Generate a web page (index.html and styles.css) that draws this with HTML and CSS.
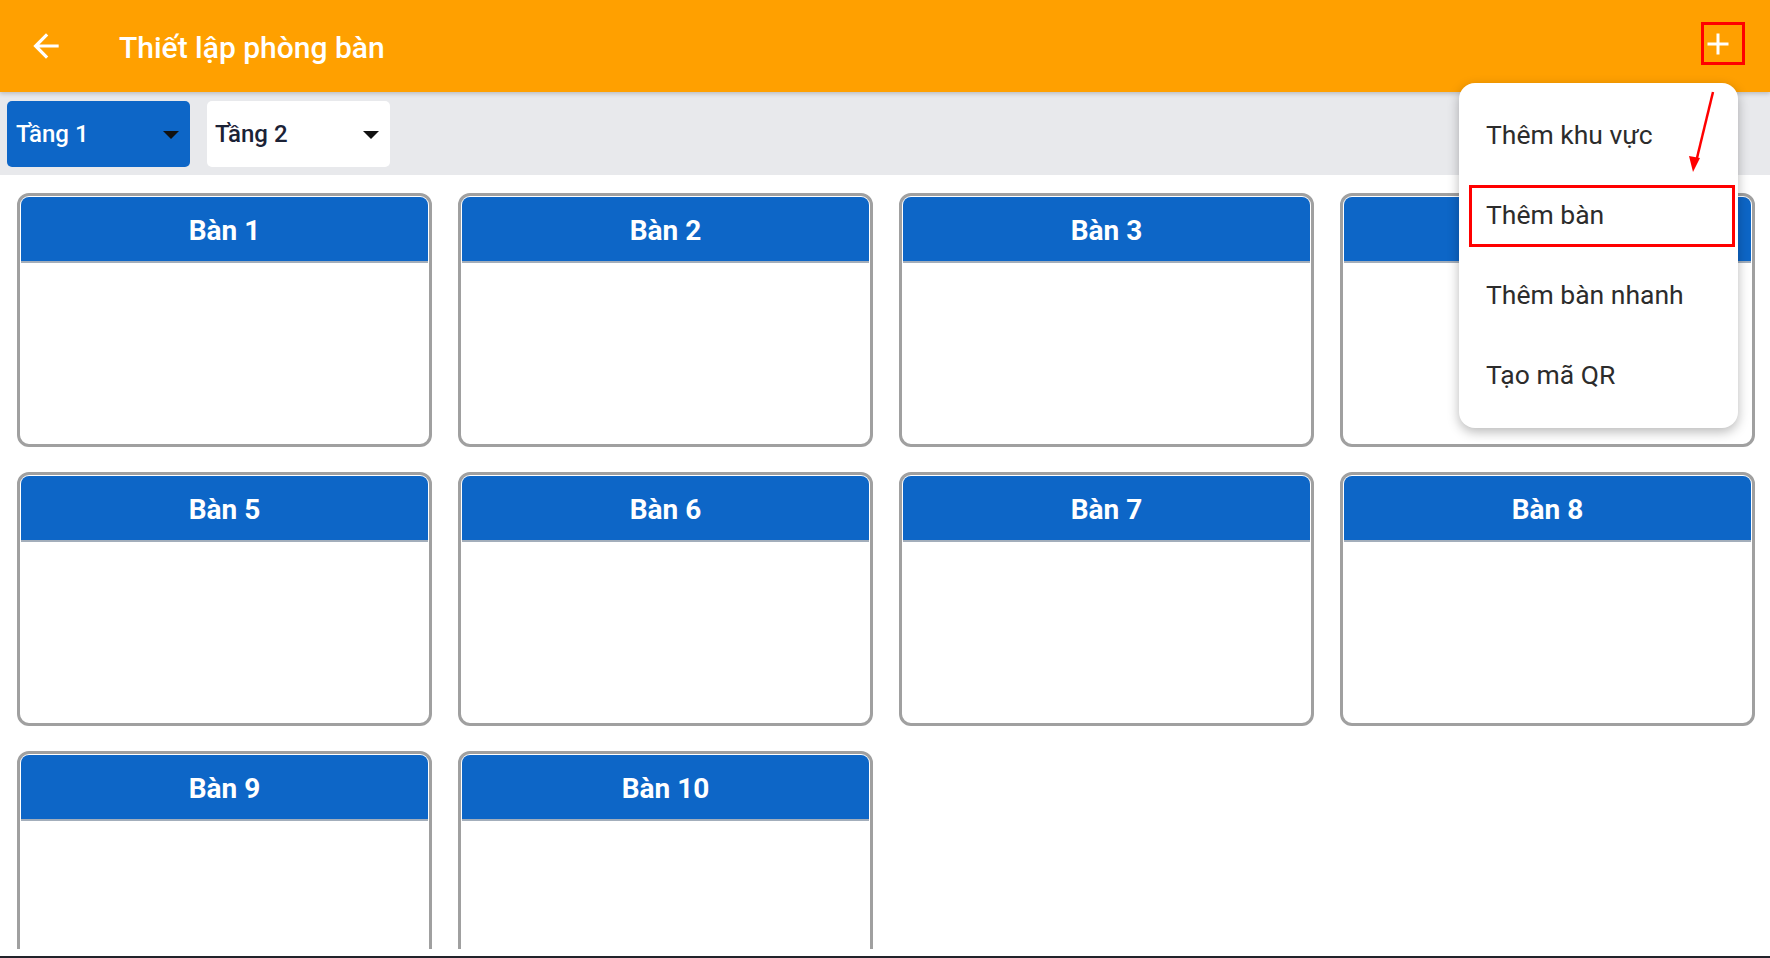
FILE: index.html
```html
<!DOCTYPE html>
<html lang="vi">
<head>
<meta charset="utf-8">
<title>Thiết lập phòng bàn</title>
<link rel="stylesheet" href="styles.css">
</head>
<body>
<div class="app">
  <header class="appbar">
    <button class="back" aria-label="Quay lại">
      <svg viewBox="0 0 24 24" width="38" height="38"><path d="M20 11H7.83l5.59-5.59L12 4l-8 8 8 8 1.41-1.41L7.83 13H20v-2z" fill="#fff"/></svg>
    </button>
    <h1 class="title">Thiết lập phòng bàn</h1>
    <button class="add" aria-label="Thêm">
      <svg viewBox="0 0 24 24" width="24" height="24"><path d="M12 1.5v21M1.5 12h21" stroke="#fff" stroke-width="3" fill="none"/></svg>
    </button>
  </header>
  <nav class="floors">
    <div class="floor active"><span>Tầng 1</span><i class="caret"></i></div>
    <div class="floor"><span>Tầng 2</span><i class="caret"></i></div>
  </nav>
  <main class="content">
    <div class="grid">
      <div class="card"><div class="card-head">Bàn 1</div></div>
      <div class="card"><div class="card-head">Bàn 2</div></div>
      <div class="card"><div class="card-head">Bàn 3</div></div>
      <div class="card"><div class="card-head">Bàn 4</div></div>
      <div class="card"><div class="card-head">Bàn 5</div></div>
      <div class="card"><div class="card-head">Bàn 6</div></div>
      <div class="card"><div class="card-head">Bàn 7</div></div>
      <div class="card"><div class="card-head">Bàn 8</div></div>
      <div class="card"><div class="card-head">Bàn 9</div></div>
      <div class="card"><div class="card-head">Bàn 10</div></div>
    </div>
  </main>
  <div class="footer-strip"></div>

  <ul class="menu">
    <li class="menu-item">Thêm khu vực</li>
    <li class="menu-item marked">Thêm bàn</li>
    <li class="menu-item">Thêm bàn nhanh</li>
    <li class="menu-item">Tạo mã QR</li>
  </ul>
  <svg class="pointer" width="40" height="100" viewBox="0 0 40 100">
    <path d="M33 2 L16 72" stroke="#f00" stroke-width="2.5" fill="none"/>
    <path d="M9 66 L13 82 L20 68 Z" fill="#f00"/>
  </svg>
</div>
</body>
</html>
```

FILE: styles.css
```css
* { box-sizing: border-box; }
html, body { margin: 0; padding: 0; }
body {
  font-family: Roboto, "Noto Sans", "Liberation Sans", sans-serif;
  background: #fff;
  width: 1770px;
  height: 958px;
  overflow: hidden;
}
.app {
  position: relative;
  width: 1770px;
  height: 958px;
  display: flex;
  flex-direction: column;
}
.appbar {
  height: 92px;
  flex: none;
  background: #ffa000;
  display: flex;
  align-items: center;
  padding: 0 25px 0 27px;
  position: relative;
  z-index: 2;
  box-shadow: 0 2px 4px rgba(0,0,0,0.18);
}
.back {
  width: 38px;
  height: 38px;
  padding: 0;
  border: 0;
  background: none;
  display: flex;
}
.title {
  margin: 2px 0 0 54px;
  font-size: 30px;
  font-weight: 500;
  color: #fff;
  flex: 1;
}
.add {
  width: 44px;
  height: 43px;
  border: 3px solid #f00;
  background: none;
  padding: 0 0 0 2px;
  display: flex;
  align-items: center;
  justify-content: flex-start;
  margin-top: -5px;
}
.floors {
  height: 83px;
  flex: none;
  background: #e8e9ec;
  display: flex;
  gap: 17px;
  padding: 9px 7px 8px;
}
.floor {
  width: 183px;
  height: 66px;
  border-radius: 5px;
  background: #fff;
  display: flex;
  align-items: center;
  justify-content: space-between;
  padding: 0 11px 0 8px;
  font-size: 24px;
  font-weight: 500;
  color: #1b2236;
}
.floor.active {
  background: #0d66c7;
  color: #fff;
  padding-left: 9px;
}
.caret {
  width: 0;
  height: 0;
  border-left: 8px solid transparent;
  border-right: 8px solid transparent;
  border-top: 8px solid #111;
  margin-top: 2px;
}
.content {
  height: 774px;
  flex: none;
  overflow: hidden;
  padding: 18px 15px 0 17px;
}
.grid {
  display: grid;
  grid-template-columns: repeat(4, 415px);
  grid-auto-rows: 254px;
  column-gap: 26px;
  row-gap: 25px;
}
.card {
  border: 3px solid #a0a0a0;
  border-radius: 12px;
  background: #fff;
  padding: 1px 1px 0;
}
.card-head {
  height: 66px;
  background: #0d66c7;
  border-radius: 8px 8px 0 0;
  border-bottom: 2px solid #a3aebb;
  color: #fff;
  font-weight: 700;
  font-size: 28px;
  display: flex;
  align-items: center;
  justify-content: center;
  padding-top: 2px;
}
.footer-strip {
  flex: 1;
  background: #fff;
  border-bottom: 2px solid #22232a;
}
.menu {
  position: absolute;
  left: 1459px;
  top: 83px;
  width: 279px;
  height: 345px;
  margin: 0;
  padding: 14px 0 11px;
  list-style: none;
  background: #fff;
  border-radius: 16px;
  box-shadow: 0 4px 12px rgba(0,0,0,0.28);
  z-index: 5;
}
.menu-item {
  position: relative;
  height: 80px;
  display: flex;
  align-items: center;
  padding-left: 27px;
  padding-bottom: 5px;
  font-size: 26.5px;
  color: #2c2c2c;
}
.menu-item.marked::after {
  content: "";
  position: absolute;
  left: 10px;
  right: 3px;
  top: 8px;
  bottom: 10px;
  border: 3px solid #f00;
}
.pointer {
  position: absolute;
  left: 1680px;
  top: 90px;
  z-index: 6;
}
```
